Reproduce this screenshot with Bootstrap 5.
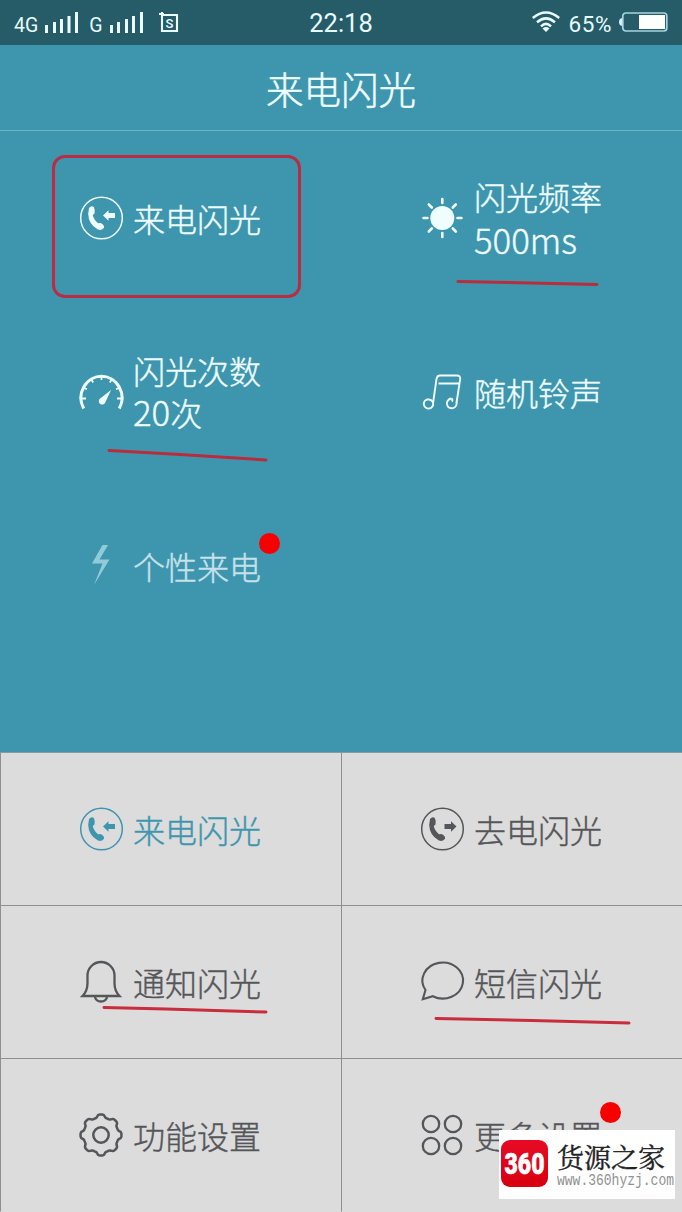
<!DOCTYPE html>
<html lang="zh-CN">
<head>
<meta charset="utf-8">
<meta name="viewport" content="width=device-width, initial-scale=1">
<title>来电闪光</title>
<link rel="stylesheet" href="https://cdn.jsdelivr.net/npm/bootstrap@5.3.0/dist/css/bootstrap.min.css">
<style>
body{font-family:"Noto Sans CJK SC",sans-serif;background:#dcdcdc;overflow:hidden}
svg{display:block;flex:none;overflow:visible}
.phone{width:682px;height:1212px;overflow:hidden}
.status{height:45px;background:#255c68;color:#e9fbff;font-family:Roboto,sans-serif;display:grid;grid-template-columns:1fr auto 1fr;padding:2px 14px 0 14px}
.net{font-size:19.5px;line-height:1}
.clock{font-size:25.5px;line-height:1}
.pct{font-size:22.5px;line-height:1;letter-spacing:.6px}
.title-bar{height:86px;background:#3e96ae;border-bottom:1px solid #6bb5ca;color:#f0fdff;font-size:37.5px;font-weight:300;line-height:1;-webkit-text-stroke:.5px currentColor}
.upper{height:621px;background:#3e96ae;color:#effdff}
.upper .tile{height:174px}
.lower{height:460px;background:#dcdcdc;color:#555659;border-top:1px solid #8a9a9d}
.lower .tile{height:153px;border-bottom:1px solid #8f8f8f;border-left:1px solid #8f8f8f;padding-left:78px}
.lower .tile:nth-child(n+5){border-bottom-color:transparent}
.tile{padding-left:79px;gap:10px}
.label{font-size:32px;font-weight:300;line-height:43px;-webkit-text-stroke:.4px currentColor}
.label .val{display:block;height:43px}
.num{font-size:34.8px;line-height:1}
.teal{color:#3e96ae}
.dim{color:#c9e2ea}
.dot{width:21px;height:21px;background:#f90000}
.frame{left:52px;top:24px;width:249px;height:143px;border:3px solid #b92c41;border-radius:13px}
.stroke{left:0;top:0}
.wm{left:157px;top:71px;width:176px;height:69px;background:#fff;z-index:2}
.logo{width:47px;height:47px;border-radius:9px;background:linear-gradient(#e80a25,#d7000f);color:#fff;margin-left:2px;margin-top:-3px;overflow:hidden}
.wm-name{font-family:"Noto Serif CJK SC","Noto Sans CJK SC",serif;font-size:27px;line-height:28px;height:28px;color:#222;white-space:nowrap;-webkit-text-stroke:.4px #222}
.wm-url{font-family:"Liberation Mono",monospace;font-size:13px;line-height:19px;color:#919191;transform:scaleY(1.25)}
</style>
</head>
<body>
<svg width="0" height="0" class="position-absolute" aria-hidden="true">
  <defs>
    <g id="handset">
      <circle cx="22.500" cy="22" r="20.800" fill="none" stroke="currentColor" stroke-width="1.500"/>
      <path fill="currentColor" d="M10 12Q12.500 9 14.800 11Q16.500 14.500 15.500 17.500L13.800 19Q14.500 23.500 19 27.300L21.500 27Q25.800 29 25 31.800Q23 35 18.500 33.300Q9.500 28 9.200 18Z"/>
    </g>
  </defs>
</svg>
<main class="phone">
  <header class="status align-items-center">
    <div class="net d-flex align-items-center">
      <span style="margin-top:4px">4G</span>
      <svg width="36" height="22" style="margin:-3px 0 0 6px" fill="currentColor"><path d="M1 14h3v8h-3zM9 11h3v11h-3zM16 8h3v14h-3zM23.500 5h3v17h-3zM31 1h3v21h-3z"/></svg>
      <span style="margin:4px 0 0 9px">G</span>
      <svg width="36" height="22" style="margin:-3px 0 0 5px" fill="currentColor"><path d="M2 14h3v8h-3zM9 11h3v11h-3zM17 8h3v14h-3zM24 5h3v17h-3zM32 1h3v21h-3z"/></svg>
      <svg width="20" height="22" style="margin:-2px 0 0 15px"><path d="M3 3h15v16h-15zM0 2h5M3 0v4" fill="none" stroke="currentColor" stroke-width="2.100"/><text x="6.400" y="15.500" font-size="13" font-weight="500" fill="currentColor">S</text></svg>
    </div>
    <div class="clock">22:18</div>
    <div class="d-flex align-items-center justify-content-end">
      <svg width="28" height="20" viewBox="0 0 28 20" style="margin-top:-3px" fill="none" stroke="currentColor" stroke-width="2.500"><path d="M.8 6Q14-5 27.200 6M5 10.300Q14 2.500 23 10.300M9 14.300Q14 9.500 19 14.300"/><path d="M10.500 16.500Q14 13.700 17.500 16.500L14 20Z" fill="currentColor" stroke="none"/></svg>
      <span class="pct" style="margin:1px 7px 0 8px">65%</span>
      <svg width="49" height="20" viewBox="0 0 49 20" style="margin-top:-3px"><path d="M3 6Q0 6.500 0 10Q0 13.500 3 14Z" fill="#d5eff5"/><rect x="3.800" y="1" width="44" height="18" rx="3" fill="none" stroke="#a6d4df" stroke-width="1.700"/><path d="M20 3h26v14h-26z" fill="#fff"/></svg>
    </div>
  </header>
  <h1 class="title-bar d-flex align-items-center justify-content-center m-0">来电闪光</h1>

  <section class="upper">
    <div class="row g-0">
      <div class="tile col-6 d-flex align-items-center position-relative">
        <svg width="44" height="44"><use href="#handset"/><path fill="currentColor" d="M24 19.500L29.500 14.300V17H36V22H29.500V24.700Z"/></svg>
        <span class="label">来电闪光</span>
        <div class="frame position-absolute"></div>
      </div>
      <div class="tile col-6 d-flex align-items-center position-relative">
        <svg width="44" height="44" fill="none" stroke="currentColor" stroke-width="2.600" stroke-linecap="round"><circle cx="22.300" cy="22" r="12" fill="currentColor" stroke="none"/><path d="M22.300 3v4M22.300 37v4M3.500 22h4M37.500 22h4M8.800 8.500l3 3M32.800 32.500l3 3M8.800 35.500l3-3M32.800 11.500l3-3"/></svg>
        <span class="label">闪光频率<span class="val num" style="line-height:43px">500ms</span></span>
        <svg class="stroke position-absolute" width="341" height="174"><path d="M117 150.500L190 152L256 153.500" fill="none" stroke="#b72d3c" stroke-width="3" stroke-linecap="round"/></svg>
      </div>
      <div class="tile col-6 d-flex align-items-center position-relative">
        <svg width="44" height="44" fill="none" stroke="currentColor"><path d="M4.700 38.500A20.500 21.500 0 1 1 40.300 38.500" stroke-width="3"/><path d="M22.500 5v5M12 9l2.200 3.500M33 9l-2.200 3.500M4 17.500l4 1.800M41 17.500l-4 1.800M2 28.500h5M38 28.500h5" stroke-width="1.800"/><path d="M32 20L26.300 32.500A3.400 3.400 0 1 1 20.800 28.700Z" fill="currentColor" stroke="none"/></svg>
        <span class="label">闪光次数<span class="val" style="position:relative;top:-1px"><span class="num">20</span>次</span></span>
        <svg class="stroke position-absolute" width="341" height="174"><path d="M109 145.500L180 149.500L266 155" fill="none" stroke="#b72d3c" stroke-width="3" stroke-linecap="round"/></svg>
      </div>
      <div class="tile col-6 d-flex align-items-center">
        <svg width="44" height="44" fill="none" stroke="currentColor" stroke-width="1.900"><path d="M13 33.500L16.500 9Q17 5.500 20 5.500H37Q40.500 5.500 40.200 9L36.500 33M18.500 13.500H39"/><path d="M13 32.500A4.700 4.700 0 1 1 8 29.200M36.500 32A4.900 4.900 0 1 1 31.500 28.500"/><path d="M8 29.200Q11.500 29.500 13 32M31.500 28.500Q33 29.500 32 31.500"/></svg>
        <span class="label">随机铃声</span>
      </div>
      <div class="tile dim col-6 d-flex align-items-center position-relative">
        <svg width="44" height="44"><path d="M23.500 1H29L20.500 15.500H30.500L15 41L23.500 19.500H13Z" fill="#91cbd9"/></svg>
        <span class="label">个性来电</span>
        <span class="dot rounded-circle position-absolute" style="left:259px;top:54px"></span>
      </div>
    </div>
  </section>

  <section class="lower">
    <div class="row g-0">
      <div class="tile teal col-6 d-flex align-items-center">
        <svg width="44" height="44"><use href="#handset"/><path fill="currentColor" d="M24 19.500L29.500 14.300V17H36V22H29.500V24.700Z"/></svg>
        <span class="label">来电闪光</span>
      </div>
      <div class="tile col-6 d-flex align-items-center">
        <svg width="44" height="44"><use href="#handset"/><path fill="currentColor" d="M36.500 19.500L31 14.300V17H24.500V22H31V24.700Z"/></svg>
        <span class="label">去电闪光</span>
      </div>
      <div class="tile col-6 d-flex align-items-center position-relative">
        <svg width="44" height="44" fill="none" stroke="currentColor" stroke-width="2.300"><path d="M3.500 36Q8.500 31 8.500 23V15.500A13.500 13.500 0 0 1 35.500 15.500V23Q35.500 31 40.500 36ZM16 36.500A6 5 0 0 0 28 36.500"/></svg>
        <span class="label">通知闪光</span>
        <svg class="stroke position-absolute" width="341" height="153"><path d="M103 101.500L165 103L265 106" fill="none" stroke="#c72d3d" stroke-width="3" stroke-linecap="round"/></svg>
      </div>
      <div class="tile col-6 d-flex align-items-center position-relative">
        <svg width="44" height="44" fill="none" stroke="currentColor" stroke-width="2.100"><path d="M5.500 30A20.300 18 0 1 1 12.800 36.200L2.800 39.200Z"/></svg>
        <span class="label">短信闪光</span>
        <svg class="stroke position-absolute" width="341" height="153"><path d="M94 112.500L190 114.500L287 117" fill="none" stroke="#c72d3d" stroke-width="3" stroke-linecap="round"/></svg>
      </div>
      <div class="tile col-6 d-flex align-items-center">
        <svg width="44" height="44" fill="none" stroke="currentColor" stroke-width="2.500" stroke-linejoin="round"><path id="gear"/><circle cx="22" cy="22" r="7.700"/></svg>
        <span class="label">功能设置</span>
      </div>
      <div class="tile col-6 d-flex align-items-center position-relative">
        <svg width="44" height="44" fill="none" stroke="currentColor" stroke-width="2.300"><circle cx="11" cy="11" r="8.200"/><circle cx="33" cy="11" r="8.200"/><circle cx="11" cy="33" r="8.200"/><circle cx="33" cy="33" r="8.200"/></svg>
        <span class="label">更多设置</span>
        <span class="dot rounded-circle position-absolute" style="left:258px;top:43px"></span>
        <aside class="wm position-absolute d-flex align-items-center">
          <div class="logo flex-shrink-0"><svg width="47" height="47"><text x="23.500" y="33.500" text-anchor="middle" textLength="40" lengthAdjust="spacingAndGlyphs" font-family="Roboto" font-weight="900" font-size="29" fill="#fff" stroke="#fff" stroke-width=".6">360</text></svg></div>
          <div style="margin:4px 0 0 9px"><div class="wm-name">货源之家</div><div class="wm-url">www.360hyzj.com</div></div>
        </aside>
      </div>
    </div>
  </section>
</main>
<script src="https://cdn.jsdelivr.net/npm/bootstrap@5.3.0/dist/js/bootstrap.bundle.min.js"></script>
<script>
// Gear outline: eight soft teeth around the hub
let d = '';
for (let i = 0; i < 120; i++) {
  const a = i * Math.PI / 60;
  const r = 19 + 1.5 * Math.tanh(2.2 * Math.cos(8 * a));
  d += (i ? 'L' : 'M') + (22 + r * Math.sin(a)).toFixed(2) + ' ' + (22 - r * Math.cos(a)).toFixed(2);
}
document.getElementById('gear').setAttribute('d', d + 'Z');
</script>
</body>
</html>
